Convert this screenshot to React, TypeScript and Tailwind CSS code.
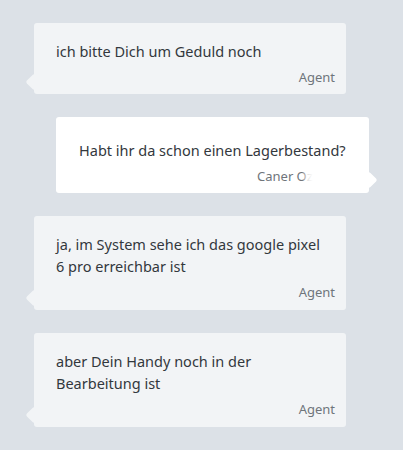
export default function App() {
  const font = { fontFamily: '"Noto Sans", "Open Sans", sans-serif' }

  return (
    <div className="min-h-[450px] w-full bg-[#dce1e7] pt-[23px] pb-[20px] flex flex-col gap-[23px]" style={font}>
      {/* agent */}
      <div className="relative ml-[34px] w-[312px] rounded-[3px] bg-[#f2f4f6] pl-[22px] pr-[11px] pt-[17px] pb-[8px]">
        <span className="absolute left-[-6px] bottom-[6px] h-[12px] w-[12px] rotate-45 rounded-[2px] bg-[#f2f4f6]"></span>
        <p className="text-[14.5px] leading-[22px] text-[#33383d]">ich bitte Dich um Geduld noch</p>
        <p className="mt-[6px] text-right text-[13px] leading-[18px] text-[#6f757b]">Agent</p>
      </div>

      {/* customer */}
      <div className="relative ml-[56px] w-[313px] rounded-[3px] bg-white pl-[23px] pr-[18px] pt-[22px] pb-[8px]">
        <span className="absolute right-[-6px] bottom-[7px] h-[12px] w-[12px] rotate-45 rounded-[2px] bg-white"></span>
        <p className="whitespace-nowrap text-[14.5px] leading-[22px] text-[#33383d]">Habt ihr da schon einen Lagerbestand?</p>
        <div className="mt-[6px] flex justify-end pr-[38px]">
          <div className="relative w-[56px] overflow-hidden whitespace-nowrap text-[13px] leading-[18px] text-[#6f757b]">
            Caner Ozturk
            <span className="absolute inset-y-0 right-0 w-[11px] bg-gradient-to-r from-white/0 via-white/80 to-white"></span>
          </div>
        </div>
      </div>

      {/* agent */}
      <div className="relative ml-[34px] w-[312px] rounded-[3px] bg-[#f2f4f6] pl-[22px] pr-[22px] pt-[17px] pb-[9px]">
        <span className="absolute left-[-6px] bottom-[6px] h-[12px] w-[12px] rotate-45 rounded-[2px] bg-[#f2f4f6]"></span>
        <p className="text-[14.5px] leading-[22px] text-[#33383d]">ja, im System sehe ich das google pixel 6 pro erreichbar ist</p>
        <p className="mt-[6px] -mr-[11px] text-right text-[13px] leading-[18px] text-[#6f757b]">Agent</p>
      </div>

      <div className="relative ml-[34px] w-[312px] rounded-[3px] bg-[#f2f4f6] pl-[22px] pr-[22px] pt-[17px] pb-[9px]">
        <span className="absolute left-[-6px] bottom-[6px] h-[12px] w-[12px] rotate-45 rounded-[2px] bg-[#f2f4f6]"></span>
        <p className="text-[14.5px] leading-[22px] text-[#33383d]">aber Dein Handy noch in der Bearbeitung ist</p>
        <p className="mt-[6px] -mr-[11px] text-right text-[13px] leading-[18px] text-[#6f757b]">Agent</p>
      </div>
    </div>
  )
}
